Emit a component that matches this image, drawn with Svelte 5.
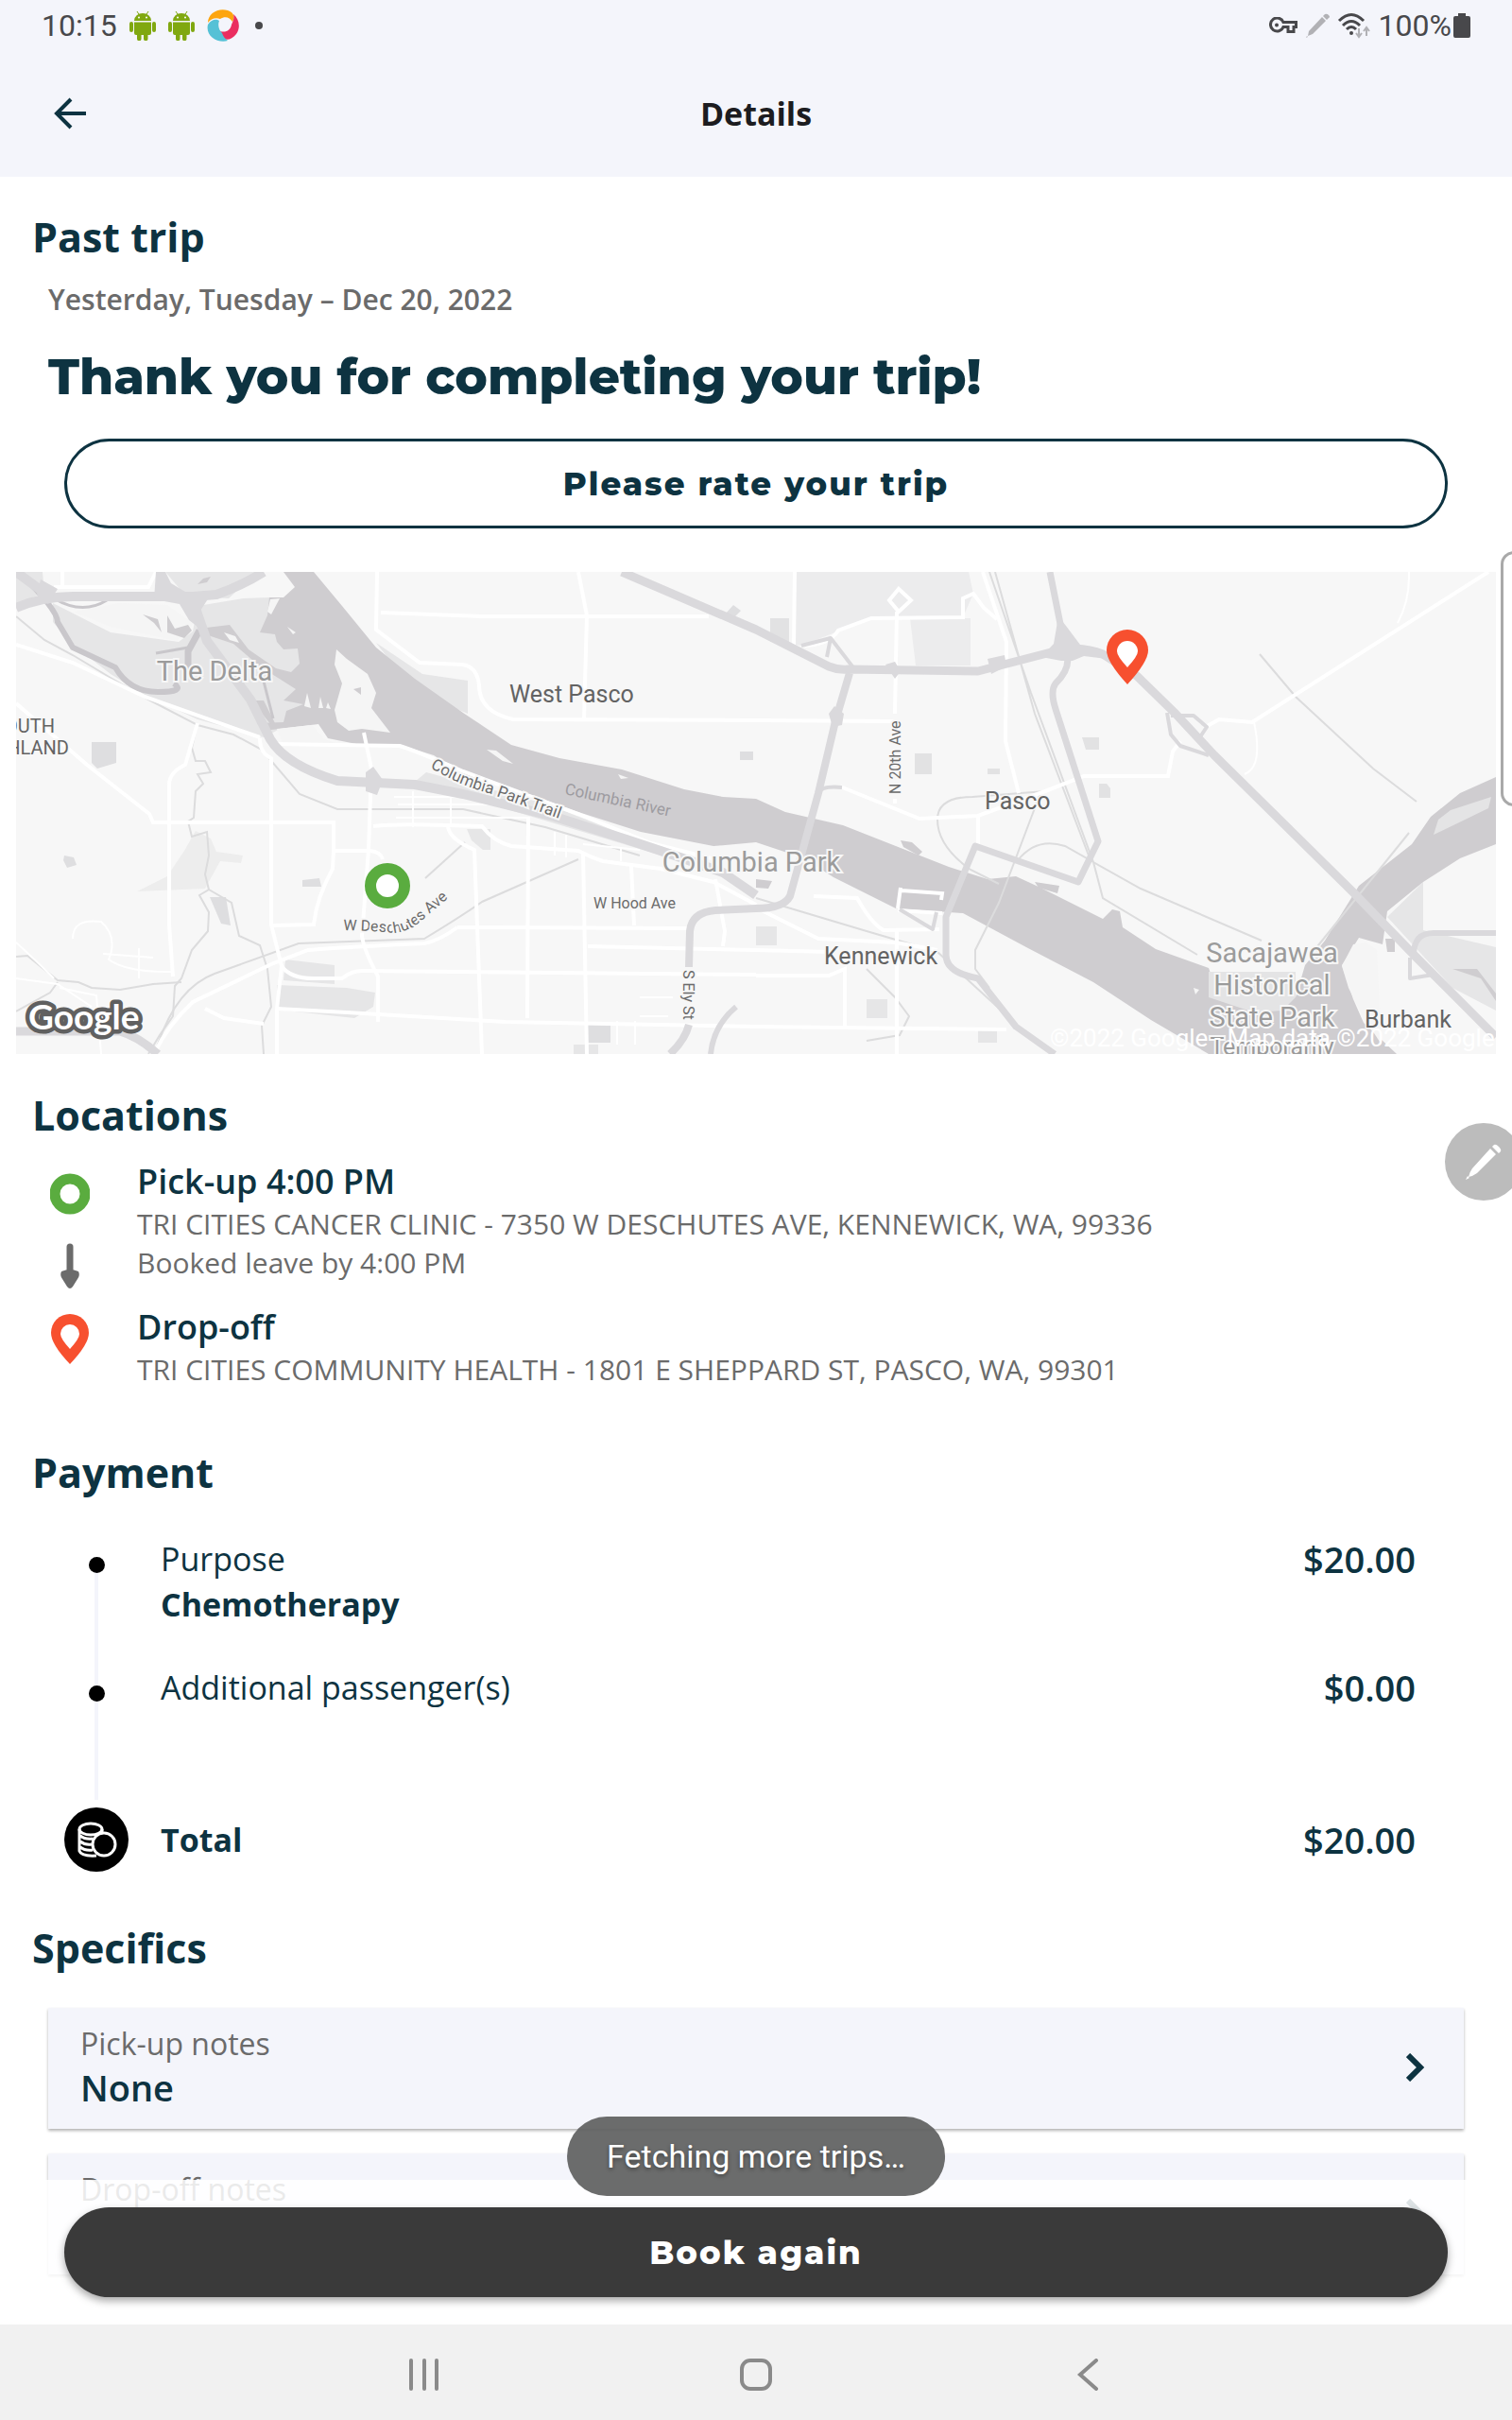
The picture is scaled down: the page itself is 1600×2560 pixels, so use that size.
<script lang="ts">
  const payments = [
    { label: 'Purpose', value: 'Chemotherapy', amount: '$20.00' },
    { label: 'Additional passenger(s)', value: '', amount: '$0.00' },
  ]

  const notes = [
    { label: 'Pick-up notes', value: 'None' },
    { label: 'Drop-off notes', value: 'None' },
  ]

  // local streets, drawn as thin white lines
  const streets = [
    'M0 77 60 96 136 132 258 175',
    'M258 176Q258 192 270 197V373L281 417 276 462 276 510',
    'M0 139 75 204 141 256 145 265H336V295H374Q386 296 388 304',
    'M336 295 335 314Q318 345 315 373L270 374',
    'M192 160 179 204Q162 212 162 225V373L166 428',
    'M368 170 376 208 373 294 366 385Q368 400 383 428V476',
    'M269 182 406 184Q425 190 473 211L595 256 672 287 740 304',
    'M378 269Q400 266 457 268L493 269Q505 285 524 290L595 295Q608 302 621 306L682 314 738 328 783 352',
    'M457 268Q457 282 485 294L493 510',
    'M542 259 541 472',
    'M600 297 604 510',
    'M467 376 712 377',
    'M281 417Q290 430 315 430H345Q355 422 366 422L783 426',
    'M605 396 783 400 860 402',
    'M276 462 350 466 518 476 783 481 1048 484',
    'M146 510Q160 480 187 455L270 415 309 400Q360 396 432 393 448 390 467 376',
    'M651 311 654 374',
    'M382 0 381 61 427 96 472 98Q488 100 490 120 490 148 526 156L783 157 931 158',
    'M386 43 493 47 733 47',
    'M595 0 604 46 601 156',
    'M40 16H140L148 0M49 0V14',
    'M824 0 823 78',
    'M831 78Q860 78 870 62L905 49 1002 48V28L1013 23 1024 38 1038 50',
    'M932 42 930 150M930 240V245',
    'M934 18 947 30 934 42 924 30Z',
    'M1023 0 1048 74 1047 179 1061 234',
    'M872 227 956 261 1018 258 1089 232 1130 216H1219L1224 190 1232 179',
    'M1018 258V288',
    'M1257 165 1273 156 1308 159 1558 0',
    'M783 427H860L877 420V482',
    'M932 379V510',
    'M844 343 890 345Q905 372 918 379L977 378',
    'M783 355 849 388 931 392 975 400',
    'M740 325 750 380 748 396',
    'M200 462 220 472 262 478',
  ]

  const minorStreets = [
    'M60 388Q60 366 90 370 108 386 98 410 118 424 166 423',
    'M0 392Q20 410 40 430M46 440 85 448 90 510',
    'M0 430 44 436 80 460M92 404 145 408M130 398V430',
    'M400 238H480M404 246H510M402 260H540M420 232V270M460 234V268',
    'M600 288 660 294M570 275V300M582 278V302M640 292V306',
    'M660 450H695M660 470H690M636 475V500M655 475V500',
    'M1310 159Q1320 206 1300 214M1474 0Q1475 30 1462 54',
  ]

  // trails, creeks and rail lines
  const trails = [
    'M192 160 186 186 190 200 200 200 206 212 192 214 198 224 190 232 188 260 182 264 186 280 202 275 204 300 200 320 204 336 194 342 204 360 203 380 186 400 175 430 168 438 166 470 152 490 140 510',
    'M204 336 228 350 236 385 258 395 266 420 270 460 260 480 262 510',
    'M0 407 12 406 44 432 66 434 80 440 110 442 145 436 175 434',
    'M0 465 36 445 44 434',
    'M0 47 30 72 60 88 100 112 140 135 192 162 230 172 260 188 300 235 340 251H473L560 270 660 300',
    'M150 500Q170 440 210 425L299 393 432 388Q470 365 493 349L595 304',
    'M1030 0 1074 128 1140 307 1190 335 1318 390M1036 0 1078 150 1135 300',
    'M1316 87 1354 132 1436 208 1482 243',
    'M1084 234 1040 350 1015 400 1015 420 1030 440',
    'M1089 232 1012 238Q975 238 975 262 975 290 1010 315L1040 330',
    'M1060 305Q1080 280 1110 290L1140 307 1150 345 1250 405',
    'M783 345 900 380 975 402 1060 480',
    'M900 420 930 450 945 470 935 490 900 496',
    'M1374 400 1474 276',
    'M433 324 475 286',
  ]
</script>

<svelte:head>
  <title>Details</title>
</svelte:head>

<div class="screen">
  <header>
    <div class="status">
      <div class="status-group">
        <span>10:15</span>
        {#each [1, 2] as i (i)}
          <svg class="robot" viewBox="0 0 28 32" aria-hidden="true">
            <path
              d="M5 11a9 8 0 0 1 18 0ZM5 12.500h18V24a2 2 0 0 1-2 2h-1.500v4a2 2 0 0 1-4.500 0v-4h-2.500v4a2 2 0 0 1-4.500 0v-4H7a2 2 0 0 1-2-2ZM0 14a2 2 0 0 1 4 0v7a2 2 0 0 1-4 0ZM24 14a2 2 0 0 1 4 0v7a2 2 0 0 1-4 0Z"
              fill="#80a810"
            />
            <path d="M8 1l2.500 4M20 1l-2.500 4" stroke="#80a810" />
            <circle cx="10" cy="7.500" r="1" fill="#fff" />
            <circle cx="18" cy="7.500" r="1" fill="#fff" />
          </svg>
        {/each}
        <svg class="swirl" viewBox="0 0 34 34" aria-hidden="true">
          <path d="M1 14C1 4 12-2 22 1c6 2 8 6 5 12-3-5-8-6-13-3-5-2-10 0-13 4Z" fill="#fda50f" />
          <path d="M28 5c6 5 8 14 3 21-4 5-9 7-13 5-2-2-3-5-4-8 6 2 11-1 12-7 2-4 3-7 2-11Z" fill="#ea2e60" />
          <path d="M1 16c4-6 9-6 12-4-2 5 0 10 3 13 1 3 3 6 6 8C11 36-2 28 1 16Z" fill="#55c1d6" />
        </svg>
        <i class="more"></i>
      </div>
      <div class="status-group right">
        <svg width="30" height="18" viewBox="0 0 30 18" fill="none" stroke="#48484b" stroke-width="3" aria-hidden="true">
          <path d="M15 5.500h13.500v5h-2.500v5h-6v-5h-5a7 7 0 1 1 0-5Z" />
          <circle cx="8" cy="8.500" r="2" fill="#48484b" stroke="none" />
        </svg>
        <svg width="26" height="26" viewBox="0 0 26 26" fill="#b1b1b5" aria-hidden="true">
          <path d="M18 4l4 4L8 22l-5 2 1-5ZM19 3l2-2q2-1 4 1t0 3l-2 2ZM2 24l-1 2 2-1Z" />
        </svg>
        <svg width="36" height="28" viewBox="0 0 36 28" fill="none" aria-hidden="true">
          <path d="M2 9q13-13 26 0M6 14q9-9 18 0M10 18q5-5 10 0" stroke="#48484b" stroke-width="3" />
          <circle cx="15" cy="22" r="2" fill="#48484b" />
          <path d="M23 17v8m-3-3 3 4 3-4M31 25v-8m-3 3 3-4 3 4" stroke="#b1b1b5" stroke-width="2" />
        </svg>
        <span class="charge">
          100%
          <svg width="18" height="26" viewBox="0 0 18 26" fill="#48484b" aria-hidden="true">
            <path d="M5 0h8v3h3a2 2 0 0 1 2 2v19a2 2 0 0 1-2 2H2a2 2 0 0 1-2-2V5a2 2 0 0 1 2-2h3Z" />
          </svg>
        </span>
      </div>
    </div>

    <div class="app-bar">
      <button class="icon-button" aria-label="Back">
        <svg width="34" height="34" viewBox="0 0 34 34" fill="none" stroke="#0d3341" stroke-width="4" aria-hidden="true">
          <path d="M18 2 3 17l15 15M3 17h31" />
        </svg>
      </button>
      <h1>Details</h1>
    </div>
  </header>

  <main>
    <section class="summary">
      <h2>Past trip</h2>
      <p class="date">Yesterday, Tuesday – Dec 20, 2022</p>
      <p class="thanks">Thank you for completing your trip!</p>
      <button class="pill rate">Please rate your trip</button>
    </section>

    <svg class="map" viewBox="0 0 1566 510" role="img" aria-label="Trip map">
      <rect width="1566" height="510" fill="#f7f7f7" />

      <g fill="#e6e6e7">
        <path d="M39 33 100 64 172 74 187 63 192 36 240 28 268 27 310 60 310 150 262 175 192 156 136 130 100 108 60 77 39 53Z" />
        <path d="M158 0H255L225 28 180 26Z" />
        <path d="M0 0H28L30 22 0 34Z" />
        <path d="M381 75 430 108 478 115V150L420 125Z" />
        <path d="M80 180h26v22l-20 6-6-6ZM51 300l10 2 3 8-10 3-4-8ZM303 326l18-2 2 9h-20Z" fill="#dedee0" />
        <path d="M422 222 434 212 560 245 700 300 720 310 690 302Z" />
        <path d="M477 272h25v22h-8l-12-10ZM285 410l52 6v20l-54-4ZM276 437 350 440l30 5-2 15-20 12-82-9Z" />
        <path d="M190 274 206 282 212 296 240 300 238 308 216 306 200 335 128 338 160 322 178 295Z" fill="#ededed" />
        <path d="M205 344h17l5 30-10-2ZM750 45l9-10 8 6-8 8ZM766 190h14v9h-14ZM602 478h27v20h-27Z" fill="#dedee0" />
        <path d="M824 0h184l5 23-11 25-97 1-74 29-7-1Z" fill="#ececed" />
        <path d="M946 49h64v50h-58Z" fill="#ececed" />
        <path d="M951 192h18v22h-18ZM1128 175h18v13h-14ZM1146 224h8l4 5v10h-12ZM1028 208h13v6h-13ZM798 49h20v25h-20Z" fill="#e2e2e3" />
        <path d="M1489 328V379L1566 397V464L1520 440 1451 365Z" />
        <path d="M783 375h22v20h-22ZM900 452h22v20h-22ZM1018 484h20v14h-20ZM590 500h26v10h-26Z" />
      </g>

      <!-- Columbia and Snake rivers -->
      <path
        fill="#cfcdd0"
        d="M315 0 345 36 381 80 422 113 473 149 524 183 575 197 641 209 707 230 748 238 783 240 814 254 875 268 936 292 987 312 1028 325 1058 322 1084 334 1150 367 1160 357 1168 359 1171 376 1206 399 1262 419 1273 450 1354 450 1364 416 1385 390 1421 332 1477 288 1497 259 1528 234 1566 217V288L1528 303 1489 328 1451 359 1446 394 1421 387 1403 416 1415 452 1426 477 1461 510H1262L1201 474 1140 434 1069 397 1002 361 931 356 865 323 834 303 783 286 738 290 661 275 595 254 534 232 473 214 442 194 410 184 370 184 330 176 320 161 262 168 255 160 283 159 286 147 304 140 283 136 296 124 258 100 230 76 200 66 193 60 226 56 246 82 275 102 291 106 300 97 298 81 283 82 276 74 274 66 258 64 266 46 268 27 283 27 295 16 283 0Z"
      />
      <g fill="#f5f5f5">
        <path d="M339 82 350 92 372 108 381 128 376 144 396 170 366 166 352 168 340 159 337 146 345 118 337 98Z" />
        <path d="M287 58 296 64 293 66ZM308 128 305 142 312 144ZM322 132 320 144 325 144ZM330 138 328 144 333 145ZM498 188 508 189 526 203 515 200ZM637 214 648 218 640 219ZM1246 440l6 2-4 5Z" />
        <path d="M269 29 279 28 270 45 266 42ZM220 64 232 68 236 75 226 72ZM60 42 110 33 160 35 188 55 170 73 100 58Z" />
        <path d="M276 166 313 162 325 176 340 182 282 182Z" />
        <path d="M1415 394 1428 392 1440 400 1445 500 1425 470 1410 440 1403 417Z" />
      </g>
      <path d="M1500 278 1505 262 1518 252 1561 238 1558 250 1523 267Z" fill="#e4e4e5" />
      <path d="M1262 423H1354V450L1340 464 1310 466 1262 450Z" fill="#e4e4e5" />
      <g fill="#cfcdd0">
        <path d="M357 124l8-2v8ZM134 45l16 5 4 14-8-10ZM160 46l8 14 14-4 4 6-8 8-18-6ZM936 284l12 2 11 10-4 4-16-9ZM783 325l17 2-4 8-13-1ZM1078 328l26 4-2 8-20-6Z" />
        <path d="M240 122l14 14 8 0 12 24-4 2-16-20-14-18ZM198 7l8-2-4 6-10 2ZM1520 420l30 10 16 24v-8l-20-26ZM1449 388h10v14h-8Z" />
      </g>

      <g fill="none" stroke="#c9c7cb">
        <path d="M3 0Q44 40 44 53L60 80 105 101Q120 127 150 127T167 118" stroke-width="6" />
        <path d="M182 105V84L194 62" stroke-width="7" />
        <path d="M40 28Q70 46 96 30M182 80 148 86M258 100 272 155" stroke-width="3" />
      </g>

      <g fill="none" stroke="#dcdcdd" stroke-width="2">
        {#each trails as d}
          <path {d} />
        {/each}
      </g>
      <g fill="none" stroke="#fff">
        {#each minorStreets as d}
          <path {d} stroke-width="2" />
        {/each}
        {#each streets as d}
          <path {d} stroke-width="4" />
        {/each}
        <path d="M933 356 936 334M937 337 980 340 979 347M933 358 980 361" stroke-width="4" />
      </g>

      <!-- highways -->
      <g fill="none" stroke="#dad9dc" stroke-linejoin="round">
        <path d="M0 38Q28 26 60 26H187M0 0 34 25M187 26 212 24Q240 14 262 0" stroke-width="10" />
        <path d="M187 30 202 73 248 135 269 177Q285 204 340 221L422 225 473 235 570 259 646 283 697 300 748 318 783 342" stroke-width="10" />
        <path d="M641 0 783 61 860 100Q870 104 880 103L1018 105 1099 84Q1128 78 1150 87L1186 110 1227 150 1268 194 1415 339 1482 408 1566 492" stroke-width="9" />
        <path d="M1094 0 1106 60M1112 88Q1116 102 1100 118 1094 126 1100 145L1145 285 1124 328 1015 290 984 365V405Q984 424 1018 430L1058 481 1099 510" stroke-width="7" />
        <path d="M882 107 867 158 849 234 819 343Q812 356 783 356L740 358Q715 360 713 380L712 418M712 479Q708 495 692 510" stroke-width="8" />
        <path d="M1479 405Q1479 382 1500 382H1566M735 510Q738 480 762 460" stroke-width="6" />
        <path d="M831 78 862 70 885 100M862 70 858 90M1218 149 1222 172 1232 184 1262 194M1222 152 1246 152 1260 164 1252 176M1475 408V430L1500 426M935 357 970 378 974 360M849 234Q852 226 874 228" stroke-width="4" />
        <path d="M0 486H110Q130 492 150 510" stroke-width="9" />
      </g>
      <g fill="#dad9dc">
        <path d="M148 0h10l6 12 20 12h22l-11 17 1 20-13-10-10-17-27-5Z" />
        <path d="M1103 47 1111 57 1126 77 1156 86 1154 92 1130 89 1118 94H1106L1085 90 1098 76Z" />
        <path d="M26 8 44 18 34 34 22 24ZM370 212l8-6 10 14-6 16-12-4Z" />
        <path d="M860 150l6-8 10 8-2 12-10 2ZM920 98l10-3 6 10-6 8ZM1028 92l18-4 2 12-16 8Z" />
      </g>

      <path id="trail-line" d="M438 207Q470 226 500 234L600 270" fill="none" />
      <path id="deschutes-line" d="M346 379Q386 380 400 382 418 380 430 368L480 326" fill="none" />

      <g class="road-label">
        <text><textPath href="#trail-line">Columbia Park Trail</textPath></text>
        <text class="street"><textPath href="#deschutes-line">W Deschutes Ave</textPath></text>
        <text class="street" x="611" y="356">W Hood Ave</text>
        <text class="street" transform="translate(706 421) rotate(90)">S Ely St</text>
        <text class="street" transform="translate(936 235) rotate(-90)">N 20th Ave</text>
      </g>
      <text class="river-label" transform="translate(580 235) rotate(12)">Columbia River</text>

      <g class="town">
        <text x="522" y="138">West Pasco</text>
        <text x="1025" y="251">Pasco</text>
        <text x="855" y="415">Kennewick</text>
        <text x="1427" y="482">Burbank</text>
        <g class="district">
          <text x="41" y="170">SOUTH</text>
          <text x="56" y="193">RICHLAND</text>
        </g>
      </g>

      <g class="park">
        <text x="210" y="115">The Delta</text>
        <text x="778" y="317">Columbia Park</text>
        <text x="1329" y="413">Sacajawea</text>
        <text x="1329" y="447">Historical</text>
        <text x="1329" y="481">State Park</text>
        <text class="closed" x="1329" y="511">Temporarily</text>
      </g>

      <text class="google" x="13" y="484">Google</text>
      <text class="credit" x="1094" y="502">©2022 Google - Map data ©2022 Google</text>

      <circle cx="393" cy="332" r="18" fill="#fff" stroke="#5aac3f" stroke-width="12" />
      <g transform="translate(1154 61)">
        <path d="M22 0a22 22 0 0 1 22 22Q44 34 22 58 0 34 0 22A22 22 0 0 1 22 0Z" fill="#f7502f" />
        <path d="M22 12a11 11 0 0 1 11 11q0 5-11 17-11-12-11-17a11 11 0 0 1 11-11Z" fill="#fff" />
      </g>
    </svg>

    <section>
      <h2>Locations</h2>
      <div class="stops">
        <svg class="route" viewBox="0 0 42 202" fill="none" aria-hidden="true">
          <circle cx="21" cy="22" r="16" stroke="#5aac3f" stroke-width="11" />
          <path d="M21 78v30" stroke="#6b6b6b" stroke-width="7" stroke-linecap="round" />
          <path d="M12 104q9-4 18 0 2 4-1 8l-5 8q-3 4-6 0l-5-8q-3-4-1-8Z" fill="#6b6b6b" />
          <path d="M21 149a20 20 0 0 1 20 20q0 12-20 33Q1 181 1 169a20 20 0 0 1 20-20Z" fill="#f7502f" />
          <path d="M21 160a10 10 0 0 1 10 10q0 5-10 16-10-11-10-16a10 10 0 0 1 10-10Z" fill="#fff" />
        </svg>
        <div class="stop-list">
          <div>
            <h3>Pick-up 4:00 PM</h3>
            <p>TRI CITIES CANCER CLINIC - 7350 W DESCHUTES AVE, KENNEWICK, WA, 99336</p>
            <p>Booked leave by 4:00 PM</p>
          </div>
          <div>
            <h3>Drop-off</h3>
            <p>TRI CITIES COMMUNITY HEALTH - 1801 E SHEPPARD ST, PASCO, WA, 99301</p>
          </div>
        </div>
      </div>
    </section>

    <section class="payment">
      <h2>Payment</h2>
      <ul>
        {#each payments as { label, value, amount }}
          <li>
            <span class="rail"><i class="dot"></i></span>
            <div class="item">
              <span>{label}</span>
              {#if value}<strong>{value}</strong>{/if}
            </div>
            <span class="amount">{amount}</span>
          </li>
        {/each}
        <li class="total">
          <svg width="68" height="68" viewBox="0 0 68 68" fill="none" stroke="#fff" stroke-width="3" aria-hidden="true">
            <circle cx="34" cy="34" r="34" fill="#000" stroke="none" />
            <ellipse cx="28" cy="23" rx="12" ry="6" />
            <path d="M16 23v23q2 6 18 5M40 23v5M17 30q5 4 13 3M17 36q5 4 12 3M17 42q5 4 13 3" />
            <circle cx="42" cy="39" r="12" />
          </svg>
          <strong>Total</strong>
          <span class="amount">$20.00</span>
        </li>
      </ul>
    </section>

    <section class="specifics">
      <h2>Specifics</h2>
      {#each notes as { label, value }}
        <button class="note">
          <span class="note-text">
            <span class="note-label">{label}</span>
            <span class="note-value">{value}</span>
          </span>
          <svg width="20" height="30" viewBox="0 0 20 30" fill="none" stroke="#0d3341" stroke-width="6" aria-hidden="true">
            <path d="m2 2 13 13L2 28" />
          </svg>
        </button>
      {/each}
    </section>

    <div class="book-bar">
      <button class="pill book">Book again</button>
    </div>
    <div class="toast" role="status">Fetching more trips…</div>
  </main>

  <nav>
    <button aria-label="Recent apps">
      <svg width="34" height="34" viewBox="0 0 34 34" aria-hidden="true"><path d="M3 2v30M17 2v30M30 2v30" /></svg>
    </button>
    <button aria-label="Home">
      <svg width="34" height="34" viewBox="0 0 34 34" aria-hidden="true"><rect x="2" y="2" width="30" height="30" rx="9" /></svg>
    </button>
    <button aria-label="Go back">
      <svg width="34" height="34" viewBox="0 0 34 34" aria-hidden="true"><path d="M26 2 9 17l17 15" /></svg>
    </button>
  </nav>

  <div class="edge-handle"></div>
  <button class="pen" aria-label="Pen menu">
    <svg width="40" height="40" viewBox="0 0 40 40" fill="#fff" aria-hidden="true">
      <path d="m27 6 6 6-20 20q-4 3-9 4 1-5 4-9ZM29 4l2-2q2-1 5 2t2 5l-2 2ZM3 35l2 2-4 2Z" />
    </svg>
  </button>
</div>

<style>
  :global(body) {
    margin: 0;
  }

  .screen {
    --ink: #0d3341;
    --grey: #6b6b6b;
    --tint: #f4f5fb;
    position: relative;
    display: flex;
    flex-direction: column;
    min-height: 100vh;
    overflow: hidden;
    background: white;
    color: var(--ink);
    font-family: 'Open Sans', sans-serif;
  }

  h1, h2, h3, p, ul {
    margin: 0;
    padding: 0;
  }

  button {
    border: 0;
    padding: 0;
    background: none;
    color: inherit;
    font: inherit;
    cursor: pointer;
  }

  svg {
    display: block;
    flex: none;
  }

  header {
    background: var(--tint);
  }

  .status {
    display: flex;
    justify-content: space-between;
    height: 53px;
    padding: 0 44px;
    font-family: Roboto, sans-serif;
    font-size: 32px;
    color: #48484b;
  }
  .status-group {
    display: flex;
    align-items: center;
    gap: 13px;
  }
  .status-group.right {
    gap: 8px;
  }
  .robot {
    width: 28px;
    height: 32px;
  }
  .swirl {
    width: 34px;
    height: 34px;
  }
  .more {
    width: 8px;
    height: 8px;
    margin-left: 4px;
    border-radius: 50%;
    background: #48484b;
  }
  .charge {
    display: flex;
    align-items: center;
    gap: 2px;
  }

  .app-bar {
    display: grid;
    grid-template-columns: 1fr auto 1fr;
    align-items: center;
    height: 134px;
    padding: 0 57px;
  }
  .icon-button {
    justify-self: start;
  }
  h1 {
    font-size: 34px;
    line-height: 46px;
    color: #1c1c20;
  }

  main {
    position: relative;
    flex: 1;
    padding-top: 35px;
  }

  h2 {
    margin: 0 34px 16px;
    font-size: 43px;
    font-weight: 700;
    line-height: 58px;
  }

  .summary {
    display: flex;
    flex-direction: column;
  }
  .date {
    margin: 0 51px;
    font-size: 30px;
    font-weight: 600;
    line-height: 41px;
    color: var(--grey);
  }
  .thanks {
    margin: 29px 51px 32px;
    font-family: Montserrat, Inter, sans-serif;
    font-size: 52px;
    font-weight: 800;
    line-height: 66px;
  }

  .pill {
    height: 95px;
    border-radius: 48px;
    font-family: Montserrat, Inter, sans-serif;
    font-size: 34px;
    font-weight: 800;
    letter-spacing: 2px;
  }
  .rate {
    margin: 0 68px 46px;
    border: 3px solid var(--ink);
  }

  .map {
    width: calc(100% - 34px);
    margin: 0 17px 36px;
    font-family: Roboto, sans-serif;
  }
  .town text {
    font-size: 25px;
    fill: #636363;
    stroke: #f7f7f7;
    stroke-width: 3px;
    paint-order: stroke;
  }
  .town .district text {
    font-size: 20px;
    text-anchor: end;
  }
  .road-label text {
    font-size: 17px;
    fill: #6b6b6b;
    stroke: #f7f7f7;
    stroke-width: 4px;
    paint-order: stroke;
  }
  .road-label .street {
    font-size: 16px;
  }
  .river-label {
    font-size: 17px;
    fill: #9d9ba0;
  }
  .park text {
    font-size: 29px;
    text-anchor: middle;
    fill: #9b9b9b;
    stroke: #f7f7f7;
    stroke-width: 4px;
    paint-order: stroke;
  }
  .park .closed {
    font-size: 25px;
  }
  .google {
    font-family: Lato, sans-serif;
    font-size: 37px;
    font-weight: 700;
    fill: white;
    stroke: #606060;
    stroke-width: 9px;
    stroke-linejoin: round;
    paint-order: stroke;
  }
  .credit {
    font-size: 26px;
    fill: white;
  }

  .stops {
    display: flex;
    gap: 50px;
    margin: 0 53px 60px;
  }
  .route {
    width: 42px;
    height: 202px;
    margin-top: 16px;
  }
  .stop-list {
    display: grid;
    gap: 23px;
  }
  h3 {
    font-size: 36px;
    font-weight: 600;
    line-height: 49px;
  }
  .stop-list p {
    font-size: 30px;
    line-height: 41px;
    color: var(--grey);
  }

  .payment ul {
    margin: 38px 102px 52px 68px;
    list-style: none;
    font-size: 34px;
    line-height: 48px;
  }
  .payment li {
    display: grid;
    grid-template-columns: 68px 1fr auto;
    column-gap: 34px;
    padding-bottom: 40px;
  }
  .rail {
    position: relative;
  }
  .rail::before {
    content: '';
    position: absolute;
    top: 30px;
    bottom: -95px;
    left: 32px;
    width: 4px;
    background: var(--tint);
  }
  .dot {
    position: relative;
    display: block;
    width: 17px;
    height: 17px;
    margin: 22px auto 0;
    border-radius: 50%;
    background: black;
  }
  .item {
    display: grid;
  }
  strong {
    font-weight: 700;
  }
  .amount {
    font-size: 38px;
    font-weight: 600;
  }
  .payment li:nth-last-child(2) {
    padding-bottom: 103px;
  }
  .payment li.total {
    align-items: center;
    padding-bottom: 0;
  }

  .specifics {
    display: grid;
    gap: 26px;
    padding-bottom: 53px;
  }
  .specifics h2 {
    margin-bottom: 8px;
  }
  .note {
    display: flex;
    align-items: center;
    justify-content: space-between;
    margin: 0 51px;
    padding: 16px 41px 19px 34px;
    background: var(--tint);
    box-shadow: 0 2px 3px rgba(0, 0, 0, 0.3);
    text-align: left;
  }
  .note-text {
    display: grid;
  }
  .note-label {
    font-size: 32px;
    line-height: 44px;
    color: var(--grey);
  }
  .note-value {
    font-size: 38px;
    font-weight: 600;
    line-height: 49px;
  }

  /* stays over the end of the list */
  .book-bar {
    position: absolute;
    inset: auto 0 0;
    display: grid;
    padding: 29px 68px;
    background: rgba(255, 255, 255, 0.86);
  }
  .book {
    background: #3a3a3a;
    box-shadow: 0 4px 8px rgba(0, 0, 0, 0.35);
    color: white;
  }
  .toast {
    position: absolute;
    bottom: 136px;
    left: 50%;
    transform: translateX(-50%);
    padding: 0 42px;
    border-radius: 42px;
    background: rgba(98, 99, 99, 0.94);
    color: white;
    font-family: Roboto, sans-serif;
    font-size: 34px;
    line-height: 84px;
    white-space: nowrap;
    text-shadow: 0 2px 4px rgba(0, 0, 0, 0.4);
  }

  nav {
    display: flex;
    justify-content: center;
    gap: 317px;
    padding: 36px 0 32px;
    background: #f1f1f1;
  }
  nav svg {
    fill: none;
    stroke: #8a8a8a;
    stroke-width: 4px;
    stroke-linecap: round;
  }

  .edge-handle {
    position: absolute;
    top: 583px;
    right: -20px;
    width: 26px;
    height: 264px;
    border: 3px solid #a9a9a9;
    border-radius: 14px;
    background: white;
  }
  .pen {
    position: absolute;
    top: 1188px;
    right: -11px;
    display: grid;
    place-items: center;
    width: 82px;
    height: 82px;
    border-radius: 50%;
    background: #bcbcbc;
  }
</style>
